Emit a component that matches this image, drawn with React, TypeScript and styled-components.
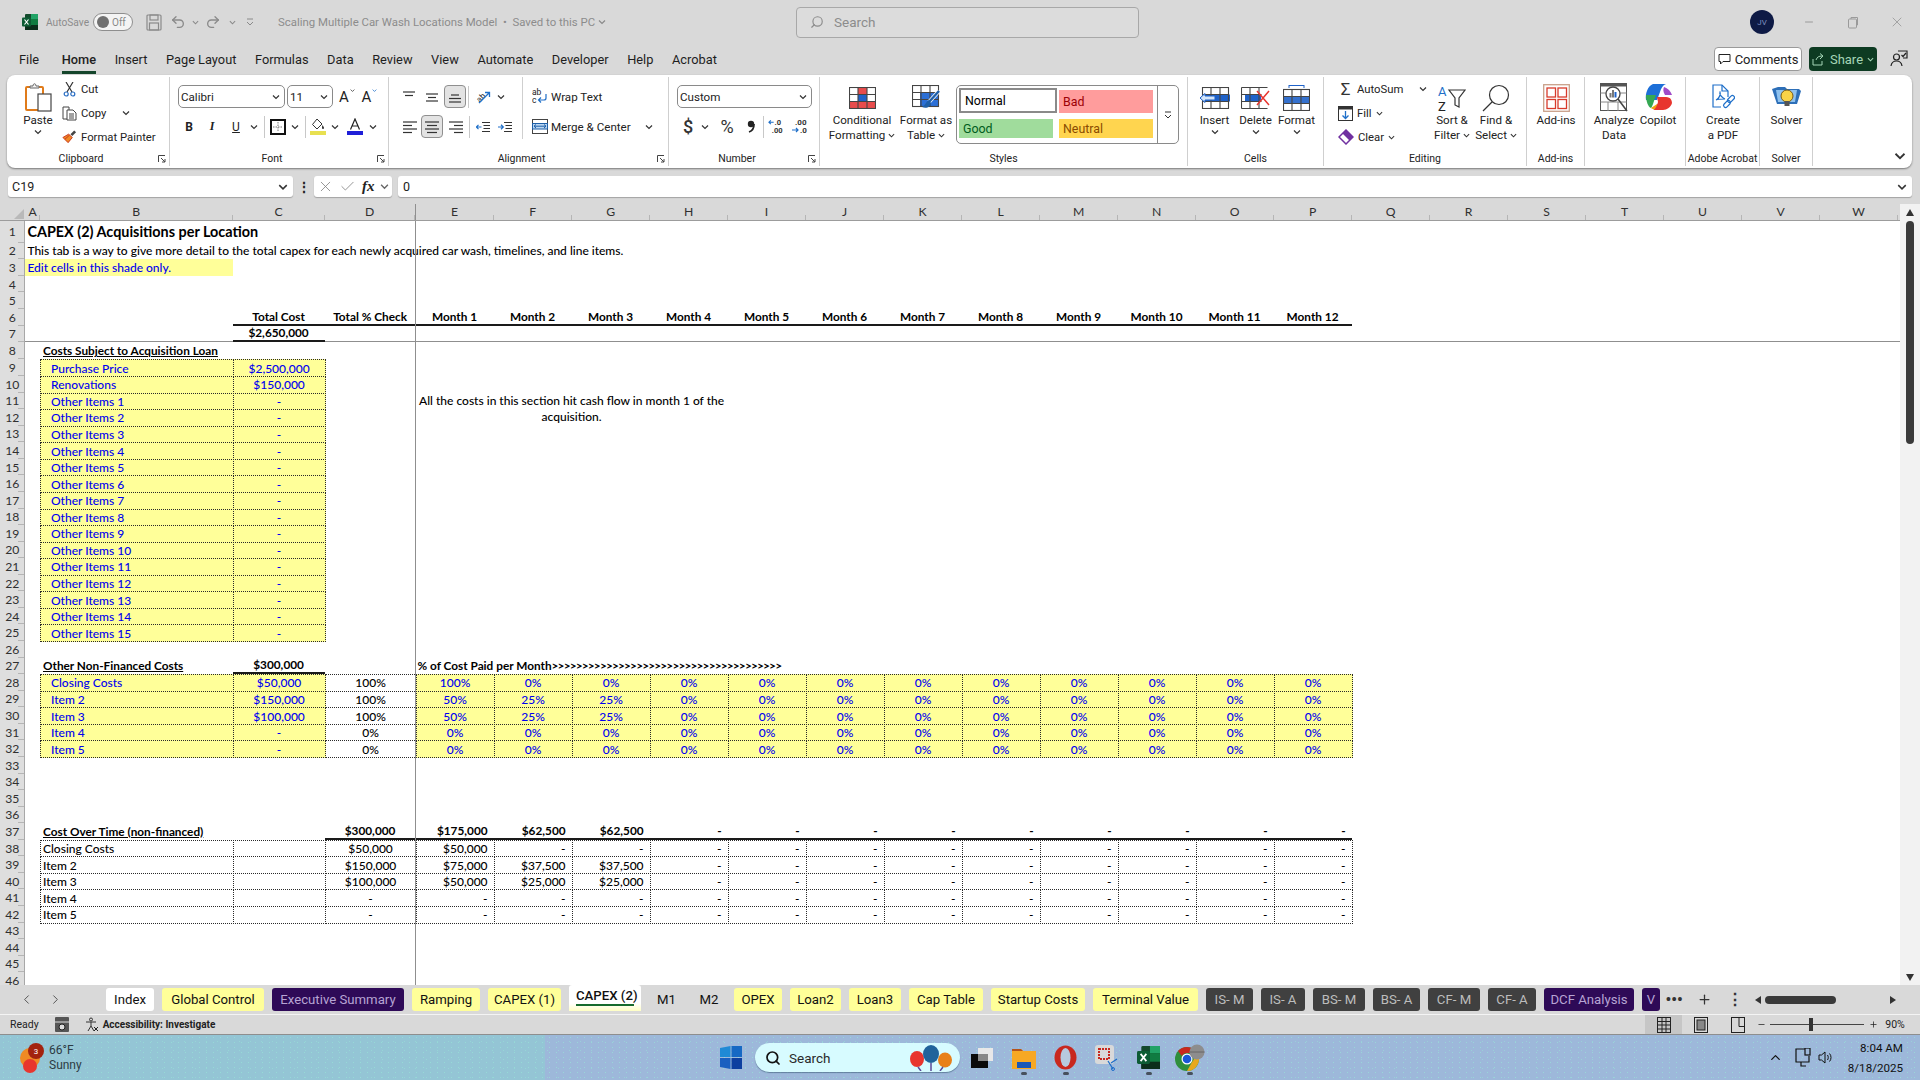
import React from 'react';
import styled, {createGlobalStyle} from 'styled-components';
import {Redo2, Search, Undo2, X, Check, Minus, Plus, ChevronUp, ChevronLeft, ChevronRight} from 'lucide-react';

const UI = `Roboto, "Liberation Sans", sans-serif`;
const SHEET = `Lato, "Liberation Sans", sans-serif`;

const GlobalStyle = createGlobalStyle`
    html, body {
        margin: 0;
        padding: 0;
        width: 1920px;
        height: 1080px;
        overflow: hidden;
        background: #d9d9d9;
    }
`;

const Window = styled.div`
    width: 1920px;
    height: 1080px;
    display: flex;
    flex-direction: column;
    background: #d9d9d9;
    font-family: ${UI};
    color: #222;
    overflow: hidden;
`;

/* ---------- title bar ---------- */

const TitleBar = styled.header`
    height: 44px;
    flex: none;
    display: flex;
    align-items: center;
`;

const TitleLeft = styled.div`
    width: 796px;
    flex: none;
    display: flex;
    align-items: center;
    padding-left: 14px;
    box-sizing: border-box;
`;

const Faded = styled.span<{$w?: number; $size?: number}>`
    font-size: ${p => p.$size ?? 10.2}px;
    color: #8c8c8c;
    white-space: pre;
    ${p => p.$w ? `width: ${p.$w}px; flex: none;` : ''}
`;

const Toggle = styled.span`
    width: 40px;
    height: 18px;
    box-sizing: border-box;
    border: 1.5px solid #8e8e8e;
    border-radius: 9px;
    background: #f4f4f4;
    display: flex;
    align-items: center;
    gap: 3px;
    padding-left: 3px;
    font-size: 10px;
    color: #888;
    margin-right: 8px;

    &::before {
        content: '';
        width: 12px;
        height: 12px;
        border-radius: 50%;
        background: #707070;
    }
`;

const Slot = styled.span<{$w: number}>`
    width: ${p => p.$w}px;
    flex: none;
    display: inline-flex;
    align-items: center;
    justify-content: center;
`;

const SearchBox = styled.div`
    width: 343px;
    height: 31px;
    flex: none;
    box-sizing: border-box;
    border: 1.5px solid #a8a8a8;
    border-radius: 4px;
    background: #dcdcdc;
    display: flex;
    align-items: center;
    gap: 10px;
    padding-left: 13px;
    font-size: 13.5px;
    color: #8c8c8c;
`;

const TitleRight = styled.div`
    margin-left: auto;
    display: flex;
    align-items: center;
    padding-right: 1px;
`;

const Avatar = styled.span`
    width: 24px;
    height: 24px;
    border-radius: 50%;
    background: #0e1a45;
    color: #7f8fc0;
    font-size: 8px;
    display: flex;
    align-items: center;
    justify-content: center;
    margin-right: 13px;
`;

const WindowButton = styled.span`
    width: 44px;
    display: flex;
    justify-content: center;
    color: #9a9a9a;
`;

/* ---------- menu row ---------- */

const MenuRow = styled.nav`
    height: 31px;
    flex: none;
    display: flex;
    align-items: center;
    gap: 18.6px;
    padding-left: 19px;
    font-size: 12.8px;
`;

const MenuItem = styled.span<{$active?: boolean}>`
    position: relative;
    line-height: 20px;
    font-weight: ${p => p.$active ? 500 : 400};
    color: #1e1e1e;

    ${p => p.$active ? `
        margin-left: 4px;

        &::after {
            content: '';
            position: absolute;
            left: 0;
            right: 0;
            bottom: -4px;
            height: 3px;
            background: #14452b;
        }
    ` : ''}
`;

const MenuRight = styled.div`
    margin-left: auto;
    display: flex;
    align-items: center;
    gap: 7px;
    padding-right: 12px;
    margin-top: -1px;
`;

const CommentsButton = styled.span`
    width: 88px;
    height: 24px;
    box-sizing: border-box;
    border: 1.5px solid #9a9a9a;
    border-radius: 4px;
    background: #fff;
    display: flex;
    align-items: center;
    justify-content: center;
    gap: 4px;
    font-size: 13px;
`;

const ShareButton = styled.span`
    width: 68px;
    height: 24px;
    border-radius: 4px;
    background: #0d3b22;
    color: #a5d6b7;
    display: flex;
    align-items: center;
    justify-content: center;
    gap: 4px;
    font-size: 13px;
    margin-right: 6px;
`;

/* ---------- ribbon ---------- */

const Ribbon = styled.section`
    height: 93px;
    flex: none;
    margin: 0 8px 0 7px;
    box-sizing: border-box;
    padding-top: 2px;
    background: #fff;
    border-radius: 8px;
    box-shadow: 0 1px 2px rgba(0, 0, 0, 0.45);
    display: flex;
    position: relative;
    font-size: 11.6px;
`;

const Group = styled.div<{$w: number}>`
    width: ${p => p.$w}px;
    flex: none;
    box-sizing: border-box;
    margin-bottom: 2px;
    display: flex;
    flex-direction: column;
    border-right: 1.5px solid #cfcfcf;
`;

const GroupBody = styled.div<{$pad?: number}>`
    flex: 1;
    display: flex;
    padding-left: ${p => p.$pad ?? 0}px;
`;

const GroupLabel = styled.div<{$launch?: boolean}>`
    height: 14px;
    flex: none;
    box-sizing: border-box;
    position: relative;
    text-align: center;
    line-height: 14px;
    font-size: 10.5px;
    color: #222;
    padding-right: ${p => p.$launch ? 14 : 0}px;
`;

const Launcher = styled.span`
    position: absolute;
    right: 3px;
    top: 3px;
    display: flex;
`;

const Big = styled.div<{$w: number}>`
    width: ${p => p.$w}px;
    flex: none;
    display: flex;
    flex-direction: column;
    align-items: center;
    padding-top: 5px;
    line-height: 15px;
    white-space: nowrap;
`;

const BigIcon = styled.div`
    height: 31px;
    display: flex;
    align-items: center;
    justify-content: center;
`;

const SmallColumn = styled.div<{$w: number; $gap?: number}>`
    width: ${p => p.$w}px;
    flex: none;
    display: flex;
    flex-direction: column;
    margin-left: ${p => p.$gap ?? 0}px;
`;

const SmallRow = styled.div`
    height: 24px;
    display: flex;
    align-items: center;
    gap: 4px;
    white-space: nowrap;
    font-size: 11.3px;
`;

const Stack = styled.div`
    display: flex;
    flex-direction: column;
    gap: 7px;
    padding-top: 8px;
`;

const Line = styled.div`
    height: 23px;
    display: flex;
    align-items: center;
    white-space: nowrap;
`;

const Select = styled.div<{$w: number}>`
    width: ${p => p.$w}px;
    height: 23px;
    flex: none;
    box-sizing: border-box;
    border: 1px solid #8a8a8a;
    border-radius: 5px;
    display: flex;
    align-items: center;
    justify-content: space-between;
    padding: 0 4px 0 2px;
    margin-right: 2px;
`;

const Pressed = styled.span<{$on?: boolean; $w: number}>`
    width: ${p => p.$w}px;
    height: 23px;
    flex: none;
    box-sizing: border-box;
    display: inline-flex;
    align-items: center;
    justify-content: center;
    border-radius: 4px;
    ${p => p.$on ? 'background: #e3e3e3; border: 1px solid #8f8f8f;' : ''}
`;

const RuleV = styled.span`
    width: 1px;
    height: 22px;
    flex: none;
    background: #c8c8c8;
`;

const FontBtn = styled.span<{$italic?: boolean; $under?: boolean}>`
    font-family: ${p => p.$italic ? '"Liberation Serif", serif' : UI};
    font-style: ${p => p.$italic ? 'italic' : 'normal'};
    font-weight: ${p => p.$under ? 400 : 700};
    text-decoration: ${p => p.$under ? 'underline' : 'none'};
    font-size: 12px;
`;

const GrowA = styled.span`
    font-size: 15px;
    display: inline-flex;
    align-items: flex-start;
    gap: 1px;
`;

const NumberGlyph = styled.span<{$size: number; $weight?: number}>`
    font-size: ${p => p.$size}px;
    font-weight: ${p => p.$weight ?? 400};
    color: #333;
    line-height: 1;
`;

const AlignSide = styled.div`
    width: 126px;
    flex: none;
    box-sizing: border-box;
    border-right: 1.5px solid #cfcfcf;
    height: 62px;
    padding-left: 1px;
`;

const Gallery = styled.div`
    width: 223px;
    height: 59px;
    margin: 8px 0 0 1px;
    flex: none;
    box-sizing: border-box;
    border: 1px solid #8a8a8a;
    border-radius: 5px;
    display: flex;
`;

const StyleGrid = styled.div`
    width: 200px;
    flex: none;
    display: grid;
    grid-template-columns: 98px 94px;
    grid-template-rows: 25px 21px;
    gap: 4px 2px;
    padding: 2px 0 0 2px;
    box-sizing: border-box;
`;

const StyleCell = styled.div<{$bg: string; $fg: string; $w?: number; $selected?: boolean}>`
    background: ${p => p.$bg};
    color: ${p => p.$fg};
    display: flex;
    align-items: center;
    padding-left: 4px;
    font-size: 12.4px;
    box-sizing: border-box;
    ${p => p.$w ? `width: ${p.$w}px;` : ''}
    ${p => p.$selected ? 'border: 2px solid #8a8a8a;' : 'margin-top: 2px;'}
`;

const GalleryMore = styled.div`
    flex: 1;
    border-left: 1.5px solid #8a8a8a;
    display: flex;
    align-items: center;
    justify-content: center;
`;

const RibbonCollapse = styled.span`
    position: absolute;
    right: 6px;
    bottom: 6px;
    display: flex;
`;

/* ---------- formula bar ---------- */

const FormulaBar = styled.div`
    height: 21px;
    flex: none;
    margin-top: 8px;
    display: flex;
    align-items: stretch;
    font-family: ${SHEET};
    font-size: 13px;
`;

const NameBox = styled.div`
    width: 285px;
    margin-left: 8px;
    flex: none;
    box-sizing: border-box;
    background: #fff;
    border-radius: 3px;
    display: flex;
    align-items: center;
    justify-content: space-between;
    padding: 0 5px 0 4px;
    font-family: ${UI};
    font-size: 12.5px;
    box-shadow: 0 1px 1px rgba(0, 0, 0, 0.25);
`;

const Grip = styled.span`
    width: 21px;
    flex: none;
    display: flex;
    align-items: center;
    justify-content: center;
    font-weight: 700;
    font-size: 14px;
`;

const FxBox = styled.div`
    width: 78px;
    flex: none;
    background: #fff;
    border-radius: 3px;
    display: flex;
    align-items: center;
    justify-content: space-around;
    color: #7a7a7a;
    box-shadow: 0 1px 1px rgba(0, 0, 0, 0.25);
`;

const Fx = styled.span`
    font-family: "Liberation Serif", serif;
    font-style: italic;
    font-weight: 700;
    font-size: 15px;
    color: #222;
`;

const FormulaInput = styled.div`
    flex: 1;
    margin: 0 8px 0 6px;
    background: #fff;
    border-radius: 3px;
    display: flex;
    align-items: center;
    justify-content: space-between;
    padding: 0 5px;
    font-family: ${UI};
    font-size: 12.5px;
    box-shadow: 0 1px 1px rgba(0, 0, 0, 0.25);
`;

/* ---------- sheet ---------- */

const SheetArea = styled.div`
    flex: 1;
    min-height: 0;
    margin-top: 7px;
    display: flex;
`;

const SheetMain = styled.div`
    width: 1900px;
    flex: none;
    display: flex;
    flex-direction: column;
    min-height: 0;
`;

const gridColumns = '25.4px 14.6px 192.6px 92px 91px repeat(19, 78px)';

const ColumnHeader = styled.div`
    height: 16px;
    flex: none;
    display: grid;
    grid-template-columns: ${gridColumns};
    border-bottom: 1px solid #9c9c9c;
    font-family: ${SHEET};
    font-size: 12.2px;
    color: #303030;
`;

const ColumnHead = styled.div<{$freeze?: boolean}>`
    text-align: center;
    line-height: 16px;
    box-sizing: border-box;
    position: relative;
    ${p => p.$freeze ? 'border-right: 1px solid #8f8f8f;' : ''}

    &::after {
        content: '';
        position: absolute;
        right: 0;
        bottom: 0;
        width: 1px;
        height: 5px;
        background: #b5b5b5;
    }
`;

const Corner = styled.div`
    display: flex;
    justify-content: flex-end;
    align-items: flex-end;
    padding: 0 1px 1px 0;
`;

const SheetBody = styled.div`
    flex: 1;
    min-height: 0;
    overflow: hidden;
    position: relative;
    background: #fff;
    font-family: ${SHEET};
    font-size: 12px;
    font-weight: 500;
    color: #000;
`;

const FreezeLine = styled.div`
    position: absolute;
    left: 415px;
    top: 0;
    bottom: 0;
    width: 1px;
    background: #8f8f8f;
`;

const Row = styled.div<{$h: number; $freeze?: boolean}>`
    height: ${p => p.$h}px;
    display: grid;
    grid-template-columns: ${gridColumns};
    grid-template-rows: ${p => p.$h}px;
    ${p => p.$freeze ? 'box-shadow: inset 0 -1px 0 #8f8f8f;' : ''}
`;

const RowHead = styled.div`
    grid-column: 1;
    background: #dedede;
    font-size: 12.2px;
    font-weight: 400;
    color: #303030;
    display: flex;
    align-items: center;
    justify-content: center;
    border-right: 1px solid #a8a8a8;
    position: relative;

    &::after {
        content: '';
        position: absolute;
        right: 0;
        bottom: 0;
        width: 6px;
        height: 1px;
        background: #b5b5b5;
    }
`;

const Cell = styled.div<{
    $col: number;
    $span?: number;
    $align?: string;
    $bold?: boolean;
    $blue?: boolean;
    $yellow?: boolean;
    $indent?: number;
    $dotted?: boolean;
    $heavy?: boolean;
    $under?: boolean;
    $wrap?: boolean;
    $title?: boolean;
}>`
    grid-column: ${p => p.$col} / span ${p => p.$span ?? 1};
    box-sizing: border-box;
    min-width: 0;
    position: relative;
    display: flex;
    align-items: center;
    justify-content: ${p => p.$align === 'center' ? 'center' : p.$align === 'right' ? 'flex-end' : 'flex-start'};
    padding-left: ${p => p.$indent ?? 0}px;
    padding-right: ${p => p.$align === 'right' ? 6 : 0}px;
    white-space: ${p => p.$wrap ? 'normal' : 'nowrap'};
    font-weight: ${p => p.$bold ? 700 : 500};
    font-size: ${p => p.$title ? '14.4px' : p.$bold ? '11.8px' : 'inherit'};
    color: ${p => p.$blue ? '#0000f0' : '#000'};
    background: ${p => p.$yellow ? '#ffff99' : 'transparent'};
    text-decoration: ${p => p.$under ? 'underline' : 'none'};
    ${p => p.$dotted ? 'border: 1px dotted #2a2a2a; margin: 0 -1px -1px 0;' : ''}
    ${p => p.$heavy ? 'border-bottom: 2px solid #1a1a1a;' : ''}
    ${p => p.$wrap ? 'text-align: center; line-height: 16.57px; align-items: flex-start;' : ''}
`;

const Arrows = styled.span`
    letter-spacing: -0.8px;
`;

const Scrollbar = styled.div`
    flex: 1;
    background: #f2f2f2;
    display: flex;
    flex-direction: column;
    align-items: center;
`;

const ScrollThumb = styled.div`
    width: 8px;
    height: 223px;
    margin-top: 5px;
    border-radius: 4px;
    background: #3a3a3a;
`;

const ScrollArrow = styled.div<{$down?: boolean}>`
    width: 0;
    height: 0;
    margin-top: ${p => p.$down ? 'auto' : '5px'};
    margin-bottom: ${p => p.$down ? '4px' : '0'};
    border-left: 4px solid transparent;
    border-right: 4px solid transparent;
    ${p => p.$down ? 'border-top: 7px solid #333;' : 'border-bottom: 7px solid #333;'}
`;

/* ---------- tabs ---------- */

const TabBar = styled.div`
    height: 30px;
    flex: none;
    display: flex;
    align-items: flex-start;
    border-bottom: 1px solid #f4f4f4;
    box-sizing: border-box;
`;

const TabArrows = styled.div`
    width: 106px;
    flex: none;
    height: 29px;
    display: flex;
    align-items: center;
    padding-left: 19px;
    box-sizing: border-box;
    gap: 14px;
    color: #444;
`;

const TabList = styled.div`
    width: 1554px;
    flex: none;
    display: flex;
    gap: 8px;
    overflow: hidden;
    height: 29px;
`;

const Tab = styled.div<{$w: number; $kind: string}>`
    width: ${p => p.$w}px;
    height: 23px;
    margin-top: 3px;
    flex: none;
    box-sizing: border-box;
    border-radius: 3px;
    display: flex;
    align-items: center;
    justify-content: center;
    white-space: nowrap;
    font-size: 13.2px;
    color: #111;
    ${p => p.$kind === 'white' ? 'background: #fff;' : ''}
    ${p => p.$kind === 'yellow' ? 'background: #ffff99;' : ''}
    ${p => p.$kind === 'purple' ? 'background: #2e0a57; color: #b7a4d4;' : ''}
    ${p => p.$kind === 'gray' ? 'background: #404040; color: #bdbdbd;' : ''}
`;

const ActiveTab = styled.div<{$w: number}>`
    width: ${p => p.$w}px;
    height: 26px;
    flex: none;
    box-sizing: border-box;
    padding: 3px 7px 0;
    background: linear-gradient(#fff 70%, #ffffc4);
    border-radius: 3px 3px 0 0;
    text-align: center;
    font-size: 13.2px;
    font-weight: 500;
    color: #111;
    white-space: nowrap;
    line-height: 15px;

    &::after {
        content: '';
        display: block;
        height: 2px;
        margin-top: 1px;
        background: #176b2e;
    }
`;

const TabTools = styled.div`
    flex: 1;
    height: 29px;
    display: flex;
    align-items: center;
    color: #333;
`;

const HScrollThumb = styled.div`
    width: 71px;
    height: 8px;
    border-radius: 4px;
    background: #3a3a3a;
    margin: 0 4px 0 4px;
`;

const ScrollArrowLeft = styled.span`
    width: 0;
    height: 0;
    margin-left: 5px;
    border-top: 4px solid transparent;
    border-bottom: 4px solid transparent;
    border-right: 6px solid #333;
`;

const ScrollArrowRight = styled.span`
    width: 0;
    height: 0;
    border-top: 4px solid transparent;
    border-bottom: 4px solid transparent;
    border-left: 6px solid #333;
`;

/* ---------- status ---------- */

const StatusBar = styled.footer`
    height: 20px;
    flex: none;
    display: flex;
    align-items: center;
    font-size: 10.5px;
    border-bottom: 1px solid #8e8e8e;
    box-sizing: border-box;
`;

const StatusLeft = styled.div`
    display: flex;
    align-items: center;
    gap: 16px;
    padding-left: 10px;
`;

const Accessibility = styled.span`
    display: flex;
    align-items: center;
    gap: 4px;
    font-weight: 700;
    font-size: 10px;
`;

const StatusRight = styled.div`
    margin-left: auto;
    display: flex;
    align-items: center;
    height: 100%;
    padding-right: 8px;
`;

const ViewButton = styled.span<{$on?: boolean}>`
    width: 37px;
    height: 100%;
    display: flex;
    align-items: center;
    justify-content: center;
    ${p => p.$on ? 'background: #c6c6c6;' : ''}
`;

const ZoomTrack = styled.span`
    width: 94px;
    height: 1px;
    margin: 0 4px;
    background: #444;
    position: relative;

    &::after {
        content: '';
        position: absolute;
        left: 39px;
        top: -6px;
        width: 4px;
        height: 13px;
        background: #333;
    }
`;

/* ---------- taskbar ---------- */

const Taskbar = styled.footer`
    height: 45px;
    flex: none;
    display: flex;
    align-items: center;
    background:
        radial-gradient(circle, rgba(150, 226, 214, 0.7) 0.7px, transparent 1px) 0 0 / 7px 5px,
        radial-gradient(circle, rgba(150, 226, 214, 0.55) 0.7px, transparent 1px) 3px 2px / 11px 9px,
        linear-gradient(90deg, #94c5d5 0 545px, #9db8da 545px);
    color: #222;
`;

const Weather = styled.div`
    width: 720px;
    flex: none;
    display: flex;
    align-items: center;
    gap: 4px;
    padding-left: 19px;
    box-sizing: border-box;
    font-size: 12px;
    line-height: 15px;
`;

const WeatherText = styled.div`
    color: #2c3b44;
`;

const TaskSearch = styled.div`
    width: 205px;
    height: 29px;
    flex: none;
    margin: 0 2px 0 13px;
    border-radius: 15px;
    background: #d7fbff;
    box-shadow: 0 1px 1px rgba(60, 90, 120, 0.6);
    display: flex;
    align-items: center;
    gap: 8px;
    padding: 0 7px 0 10px;
    box-sizing: border-box;
    font-size: 13.5px;
    color: #2a2a2a;
`;

const BalloonSlot = styled.span`
    margin-left: auto;
    display: flex;
`;

const TaskItem = styled.div<{$dot?: boolean}>`
    width: 41.5px;
    height: 45px;
    flex: none;
    position: relative;
    display: flex;
    align-items: center;
    justify-content: center;

    ${p => p.$dot ? `
        &::after {
            content: '';
            position: absolute;
            bottom: 5px;
            left: 50%;
            width: 6px;
            height: 3px;
            margin-left: -3px;
            border-radius: 2px;
            background: #47505c;
        }
    ` : ''}
`;

const Tray = styled.div`
    margin-left: auto;
    display: flex;
    align-items: center;
    gap: 7px;
    padding-right: 17px;
`;

const TrayChevron = styled.span`
    display: flex;
    margin-right: 5px;
`;

const Clock = styled.div`
    text-align: right;
    font-size: 11.6px;
    line-height: 20px;
    margin-left: 8px;
    color: #111;
`;

/* ---------- icons ---------- */

const Chev = ({size = 8, color = '#333'}: {size?: number; color?: string}) =>
    <svg width={size} height={size} viewBox="0 0 8 8"><path d="M1 2.500 4 5.500 7 2.500" fill="none" stroke={color} strokeWidth="1.200" /></svg>;

const LauncherIcon = () =>
    <svg width="8" height="8" viewBox="0 0 8 8" fill="none" stroke="#444"><path d="M.5 7V.5H7M3 3l4 4M7 4v3H4" /></svg>;

const ExcelLogo = ({size = 16}: {size?: number}) =>
    <svg width={size} height={size} viewBox="0 0 16 16">
        <rect x="3" y="0" width="13" height="16" rx="1" fill="#134a2c" />
        <rect x="9" y="0" width="7" height="5" fill="#21a366" />
        <rect x="9" y="5" width="7" height="6" fill="#107c41" />
        <rect x="3" y="11" width="13" height="5" fill="#0b2e1b" />
        <rect x="0" y="3.500" width="9" height="9" rx="1" fill="#0d5c34" />
        <path d="M2.500 5.500 6.500 10.500M6.500 5.500 2.500 10.500" stroke="#fff" strokeWidth="1.200" />
    </svg>;

const SaveIcon = () =>
    <svg width="16" height="17" viewBox="0 0 16 17" fill="none" stroke="#8a8a8a" strokeWidth="1.200">
        <rect x="1" y="1" width="14" height="15" rx="1" /><rect x="4" y="1" width="8" height="5" /><rect x="3.500" y="9" width="9" height="7" />
    </svg>;

const CustomizeIcon = ({color = '#8a8a8a'}: {color?: string}) =>
    <svg width="10" height="10" viewBox="0 0 10 10" fill="none" stroke={color}><path d="M2 2h6M2 5l3 3 3-3" /></svg>;

const RestoreIcon = () =>
    <svg width="12" height="13" viewBox="0 0 12 13" fill="none" stroke="#9a9a9a"><rect x="1.500" y="3" width="8" height="9" rx="1" /><path d="M4 3V1.500h6.500V9H9.500" /></svg>;

const BubbleIcon = () =>
    <svg width="13" height="13" viewBox="0 0 13 13" fill="none" stroke="#222"><path d="M1 1.500h11v7H5L2.500 11V8.500H1z" /></svg>;

const ShareIcon = () =>
    <svg width="14" height="14" viewBox="0 0 14 14" fill="none" stroke="#a5d6b7"><path d="M1 7v6h9V9M4 8c1-3 3-4 6-4M8 1.500 11 4 8 7" /></svg>;

const CoachIcon = () =>
    <svg width="18" height="18" viewBox="0 0 18 18" fill="none" stroke="#222" strokeWidth="1.200"><circle cx="6.500" cy="7" r="3" /><path d="M1 16c.5-3.500 2.500-5 5.500-5s5 1.500 5.500 5M8 1h9v7h-4" /><path d="M11.500 5 13 6.500 16 3" /></svg>;

const PasteIcon = () =>
    <svg width="27" height="29" viewBox="0 0 27 29">
        <rect x="1" y="4" width="17" height="23" rx="1" fill="#fff" stroke="#e07b1a" strokeWidth="2" />
        <path d="M5 5V3h3c0-3 3-3 3 0h3v2z" fill="#f4f4f4" stroke="#666" />
        <rect x="13" y="11" width="13" height="17" fill="#fff" stroke="#444" strokeWidth="1.200" />
    </svg>;

const ScissorsIcon = () =>
    <svg width="13" height="15" viewBox="0 0 13 15" fill="none">
        <path d="M3 0 9 10M10 0 4 10" stroke="#333" strokeWidth="1.200" />
        <circle cx="3.200" cy="12" r="2" stroke="#2b6fc4" strokeWidth="1.200" /><circle cx="9.800" cy="12" r="2" stroke="#2b6fc4" strokeWidth="1.200" />
    </svg>;

const CopyIcon = () =>
    <svg width="15" height="15" viewBox="0 0 15 15" fill="#fff" stroke="#444">
        <path d="M1 1h6v12H1z" /><path d="M5 4h6l3 3v7H5z" /><path d="M7 8h5M7 10h5M7 12h5" />
    </svg>;

const PainterIcon = () =>
    <svg width="16" height="16" viewBox="0 0 16 16">
        <path d="M1 8.500 6.500 14 11 8.500 7 5z" fill="#f08a24" stroke="#c7341c" />
        <path d="M3 10.500 8 6" stroke="#c7341c" />
        <path d="M9 5 13 1l2 2-4 4z" fill="#444" />
    </svg>;

const BorderIcon = () =>
    <svg width="16" height="16" viewBox="0 0 16 16" fill="none">
        <rect x="1" y="1" width="14" height="14" stroke="#111" strokeWidth="2" />
        <path d="M8 3v10M3 8h10" stroke="#777" strokeDasharray="1.500 1" />
    </svg>;

const FillIcon = () =>
    <svg width="16" height="17" viewBox="0 0 16 17">
        <path d="M7 1 2.500 6.500 7 11l5-5z" fill="#fff" stroke="#333" />
        <path d="M12.500 7c1 1.500 1.500 2.500 1.500 3a1 1 0 0 1-2 0c0-.5 0-1.500.5-3z" fill="#333" />
        <rect y="13" width="16" height="4" fill="#e8e050" />
    </svg>;

const FontColorIcon = () =>
    <svg width="16" height="17" viewBox="0 0 16 17">
        <path d="M3.500 11.500 8 1l4.500 10.500M5 8h6" fill="none" stroke="#222" strokeWidth="1.200" />
        <rect y="13" width="16" height="4" fill="#1f1fd8" />
    </svg>;

const Lines = ({widths, top = 2, step = 3.5}: {widths: [number, number][]; top?: number; step?: number}) =>
    <svg width="14" height="14" viewBox="0 0 14 14" stroke="#333" strokeWidth="1.200">
        {widths.map(([x, w], i) => <path key={i} d={`M${x} ${top + i * step}h${w}`} />)}
    </svg>;

const IndentIcon = ({flip}: {flip?: boolean}) =>
    <svg width="14" height="14" viewBox="0 0 14 14">
        <g stroke="#333" strokeWidth="1.100">
            <path d="M6 2.500h8M7.500 5.500h6.500M7.500 8.500h6.500M6 11.500h8" />
        </g>
        <path d={flip ? 'M0 7h5M3 4.800 5.300 7 3 9.200' : 'M5.500 7h-5M2.500 4.800.3 7l2.200 2.200'} fill="none" stroke="#1e6fc9" strokeWidth="1.200" />
    </svg>;

const OrientIcon = () =>
    <svg width="16" height="16" viewBox="0 0 16 16">
        <text x="1" y="11" fontSize="8" fontFamily="Roboto" fill="#222" transform="rotate(-45 6 8)">ab</text>
        <path d="M4 14 14 4M10 3.500h4.500V8" fill="none" stroke="#1e6fc9" strokeWidth="1.300" />
    </svg>;

const WrapIcon = () =>
    <svg width="16" height="17" viewBox="0 0 16 17" fill="none">
        <text x="0" y="7" fontSize="8.500" fontFamily="Roboto" fill="#222">ab</text>
        <text x="0" y="15" fontSize="8.500" fontFamily="Roboto" fill="#222">c</text>
        <path d="M14 6v4a2 2 0 0 1-2 2H7M9 9.500 6.500 12 9 14.500" stroke="#1e6fc9" strokeWidth="1.200" />
    </svg>;

const MergeIcon = () =>
    <svg width="16" height="15" viewBox="0 0 16 15" fill="none" stroke="#1e5fa8">
        <rect x=".5" y=".5" width="15" height="14" fill="#fff" stroke="#444" />
        <rect x=".5" y="4.500" width="15" height="5.500" fill="#bcd7f2" />
        <path d="M2 7.200h12M4 5.500 2 7.200l2 1.800M12 5.500l2 1.700-2 1.800" />
    </svg>;

const DecimalIcon = ({up}: {up?: boolean}) =>
    <svg width="17" height="17" viewBox="0 0 17 17">
        <text x={up ? 7 : 4} y="7" fontSize="8" fontWeight="700" fontFamily="Roboto" fill="#333">{up ? '.0' : '.00'}</text>
        <text x={up ? 4 : 9} y="15" fontSize="8" fontWeight="700" fontFamily="Roboto" fill="#333">{up ? '.00' : '.0'}</text>
        <path d={up ? 'M6 4H1M3 2 1 4l2 2' : 'M1 12h6M5 10l2 2-2 2'} fill="none" stroke="#1e6fc9" strokeWidth="1.200" />
    </svg>;

const CommaIcon = () =>
    <svg width="8" height="14" viewBox="0 0 8 14">
        <circle cx="4" cy="4" r="3.200" fill="#222" />
        <path d="M7 4c0 4-2 7-5 8" fill="none" stroke="#222" strokeWidth="1.800" />
    </svg>;

const Table = ({w = 27, h = 22, children}: {w?: number; h?: number; children?: React.ReactNode}) =>
    <svg width={w} height={h} viewBox="0 0 27 22">
        {children}
        <g fill="none" stroke="#444" strokeWidth="1.100">
            <rect x=".5" y=".5" width="26" height="21" />
            <path d="M9 .5v21M18 .5v21M.5 7.500h26M.5 14.500h26" />
        </g>
    </svg>;

const ConditionalIcon = () =>
    <Table>
        <rect x="9" y="0" width="9" height="7" fill="#e84c4c" />
        <rect x="9" y="7.500" width="9" height="7" fill="#1f62c9" />
        <rect x="9" y="15" width="18" height="7" fill="#e84c4c" />
        <rect x="0" y="15" width="9" height="7" fill="#e84c4c" />
    </Table>;

const FormatTableIcon = () =>
    <svg width="29" height="25" viewBox="0 0 29 25">
        <rect x="8" y="8" width="18" height="14" fill="#2b6fd6" />
        <g fill="none" stroke="#444" strokeWidth="1.100">
            <rect x=".5" y=".5" width="26" height="21" />
            <path d="M9 .5v21M18 .5v21M.5 7.500h26M.5 14.500h26" />
        </g>
        <path d="M27 6 17 17" stroke="#fff" strokeWidth="4" />
        <path d="M27 6 17 17" stroke="#1e5fa8" strokeWidth="2.500" />
        <path d="M17 15c-3 1-3 5-7 7 4 2 9 0 9-4z" fill="#1e5fa8" />
    </svg>;

const InsertIcon = () =>
    <svg width="31" height="22" viewBox="0 0 31 22">
        <rect x="3" y="7.500" width="28" height="7" fill="#1f62c9" />
        <g fill="none" stroke="#444" strokeWidth="1.100"><rect x="3.500" y=".5" width="26" height="21" /><path d="M12 .5v21M21 .5v21M3.500 7.500h26M3.500 14.500h26" /></g>
        <path d="M16 9H6V6.500L1 11l5 4.500V13h10z" fill="#d5e6fa" stroke="#1f62c9" />
    </svg>;

const DeleteIcon = () =>
    <svg width="29" height="22" viewBox="0 0 29 22">
        <rect x="4" y="7.500" width="16" height="7" fill="#1f62c9" />
        <g fill="none" stroke="#444" strokeWidth="1.100"><path d="M.5 .5h26M.5 21.500h26M.5 7.500h20M.5 14.500h20M9 .5v21M18 .5v21M.5 .5v21" /></g>
        <path d="M16 4 28 18M28 4 16 18" stroke="#e8352e" strokeWidth="1.500" />
    </svg>;

const FormatIcon = () =>
    <svg width="27" height="26" viewBox="0 0 27 26">
        <path d="M6 .5h15M6 0v3M21 0v3" stroke="#1f62c9" />
        <rect x="0" y="11" width="27" height="7" fill="#1f62c9" opacity=".9" />
        <g fill="none" stroke="#444" strokeWidth="1.100"><rect x=".5" y="4.500" width="26" height="21" /><path d="M9 4.500v21M18 4.500v21M.5 11.500h26M.5 18.500h26" /></g>
    </svg>;

const FillDownIcon = () =>
    <svg width="15" height="15" viewBox="0 0 15 15" fill="none">
        <rect x=".5" y=".5" width="14" height="14" fill="#fff" stroke="#333" />
        <path d="M.5 .5h14v3H.5z" fill="#333" />
        <path d="M7.500 5v7M4.500 9.500l3 3 3-3" stroke="#1e6fc9" strokeWidth="1.300" />
    </svg>;

const ClearIcon = () =>
    <svg width="16" height="16" viewBox="0 0 16 16">
        <path d="M8 1 15 8 8 15 1 8z" fill="#fff" stroke="#7030a0" strokeWidth="1.500" />
        <path d="M8 1 15 8 11.500 11.500 4.500 4.500z" fill="#7030a0" />
    </svg>;

const SortIcon = () =>
    <svg width="28" height="28" viewBox="0 0 28 28">
        <text x="0" y="12" fontSize="13" fontFamily="Roboto" fill="#1e6fc9">A</text>
        <text x="0" y="27" fontSize="13" fontFamily="Roboto" fill="#222">Z</text>
        <path d="M11 6h16l-6 8v9l-4-2v-7z" fill="#fff" stroke="#333" strokeWidth="1.200" />
    </svg>;

const FindIcon = () =>
    <svg width="28" height="28" viewBox="0 0 28 28" fill="none" stroke="#333" strokeWidth="1.200">
        <circle cx="17" cy="11" r="9.500" /><path d="M10 18 1 27" />
    </svg>;

const AddinsIcon = () =>
    <svg width="27" height="28" viewBox="0 0 27 28" fill="none" stroke="#d83b2b" strokeWidth="1.300">
        <rect x=".7" y=".7" width="25.600" height="26.600" stroke="#c9a089" />
        <rect x="4" y="4" width="8.500" height="9" /><rect x="15" y="4" width="8.500" height="9" />
        <rect x="4" y="15.500" width="8.500" height="9" /><rect x="15" y="15.500" width="8.500" height="9" />
    </svg>;

const AnalyzeIcon = () =>
    <svg width="28" height="29" viewBox="0 0 28 29" fill="none">
        <rect x=".5" y=".5" width="26" height="27" fill="#fff" stroke="#555" />
        <path d="M.5 .5h26v3H.5z" fill="#555" />
        <path d="M.5 10h26M.5 19h26M8 19v9M18 19v9" stroke="#888" />
        <circle cx="13" cy="11" r="7" fill="#fff" stroke="#444" strokeWidth="1.300" />
        <path d="M9.500 14.500V10h2v4.500zM12 14.500V7h2v7.500z" fill="#777" />
        <path d="M14.500 14.500V9h2v5.500z" fill="#1f62c9" />
        <path d="M18 16 27 28" stroke="#444" strokeWidth="1.500" />
    </svg>;

const CopilotIcon = () =>
    <svg width="29" height="27" viewBox="0 0 29 27">
        <path d="M9 0h13c-3 1-5 4-6 8l-3 8H2C1 9 4 2 9 0z" fill="#1d6fd8" />
        <path d="M2 11h10l-2 6c-1 3-2 6-3 7-3-1-5-7-5-13z" fill="#35a853" />
        <path d="M7 24c2 2 12 3 15-1l-9 -3z" fill="#f2a30f" />
        <path d="M13 13h9c5 0 6 4 6 6-1 4-5 7-9 7H9c3-1 4-5 5-8z" fill="#e8352e" />
        <path d="M20 3c3 1 6 3 8 8h-7c-2-3-2-6-1-8z" fill="#a04bc8" />
    </svg>;

const PdfIcon = () =>
    <svg width="24" height="28" viewBox="0 0 24 28" fill="none" stroke="#1e6fc9" strokeWidth="1.200">
        <path d="M10 23H2V1h9l6 6v6" /><path d="M11 1v6h6" />
        <path d="M5 16c3-1 5-6 4-8-1 2 2 6 5 7-3 0-7 0-9 1z" />
        <rect x="12" y="18" width="8" height="4" rx="2" transform="rotate(-45 16 20)" />
        <rect x="16" y="13" width="8" height="4" rx="2" transform="rotate(-45 20 15)" />
    </svg>;

const SolverIcon = () =>
    <svg width="29" height="25" viewBox="0 0 29 25">
        <path d="M0 4 6 2h7l2 2h12l2 2-4 13H5z" fill="#2d6fb8" />
        <path d="M4 5h21l-2 12H6z" fill="#8ec1ee" />
        <circle cx="15" cy="11" r="6" fill="#f8d348" stroke="#7a5a10" />
        <rect x="12.500" y="16" width="5" height="5" fill="#555" />
    </svg>;

const CornerTriangle = () =>
    <svg width="10" height="10" viewBox="0 0 10 10"><path d="M10 0v10H0z" fill="#b9b9b9" /></svg>;

const MacroIcon = () =>
    <svg width="14" height="15" viewBox="0 0 14 15"><rect width="14" height="15" rx="1" fill="#555" /><path d="M0 5h14" stroke="#ddd" /><circle cx="7" cy="10" r="3" fill="#ddd" stroke="#222" /></svg>;

const AccessIcon = () =>
    <svg width="14" height="15" viewBox="0 0 14 15" fill="none" stroke="#333"><circle cx="6" cy="2.500" r="1.500" /><path d="M1 5h10M6 5v4M6 9l-3 5M6 9l3 5" /><path d="M9 10l4 4M13 10l-4 4" stroke="#222" /></svg>;

const NormalViewIcon = () =>
    <svg width="14" height="16" viewBox="0 0 14 16" fill="none" stroke="#222"><rect x=".5" y=".5" width="13" height="15" /><path d="M5 .5v15M9 .5v15M.5 4.500h13M.5 8h13M.5 12h13" /></svg>;

const PageViewIcon = () =>
    <svg width="14" height="16" viewBox="0 0 14 16" fill="none" stroke="#222"><rect x=".5" y=".5" width="13" height="15" /><rect x="3" y="3" width="8" height="10" fill="#888" /></svg>;

const BreakViewIcon = () =>
    <svg width="14" height="16" viewBox="0 0 14 16" fill="none" stroke="#222"><rect x=".5" y=".5" width="13" height="15" /><path d="M8 .5v9H13.500" /></svg>;

const WeatherIcon = () =>
    <svg width="26" height="32" viewBox="0 0 26 32">
        <circle cx="11" cy="16" r="10" fill="#f08a24" />
        <circle cx="11" cy="24" r="7" fill="#e8352e" />
        <circle cx="17" cy="9" r="8" fill="#a3230f" />
        <text x="17" y="12" fontSize="8" textAnchor="middle" fontFamily="Roboto" fill="#fff">3</text>
    </svg>;

const WindowsIcon = () =>
    <svg width="22" height="23" viewBox="0 0 22 23">
        <path d="M0 2 10.500 0v11H0z" fill="#1f8ad6" /><path d="M11.500 0 22 0v11H11.500z" fill="#1669c4" />
        <path d="M0 12h10.500v11L0 21z" fill="#1a5fc0" /><path d="M11.500 12H22v11H11.500z" fill="#0d3f9f" />
    </svg>;

const Balloons = () =>
    <svg width="43" height="26" viewBox="0 0 43 26">
        <ellipse cx="7" cy="14" rx="7" ry="8" fill="#e8352e" />
        <ellipse cx="35" cy="15" rx="7" ry="7.500" fill="#e8801a" />
        <ellipse cx="21" cy="9" rx="8" ry="9" fill="#20639b" />
        <path d="M21 18v8M8 22l3 4M33 22l-3 4" stroke="#5a4a9a" strokeWidth="1.500" />
    </svg>;

const TaskViewIcon = () =>
    <svg width="23" height="21" viewBox="0 0 23 21">
        <rect x="7" y="1" width="15" height="13" fill="#e8e8e8" />
        <rect x="0" y="7" width="17" height="14" fill="#0a0a0a" />
        <rect x="7" y="7" width="10" height="7" fill="#888" />
    </svg>;

const FolderIcon = () =>
    <svg width="24" height="22" viewBox="0 0 24 22">
        <path d="M0 2h9l2 2h13v18H0z" fill="#f7a824" />
        <path d="M0 2h9l2 2H0z" fill="#b5541a" />
        <rect x="5" y="15" width="14" height="6" fill="#1a57b8" />
    </svg>;

const OperaIcon = () =>
    <svg width="23" height="25" viewBox="0 0 23 25">
        <ellipse cx="11.500" cy="12.500" rx="11" ry="12" fill="#c8281e" />
        <ellipse cx="11.500" cy="12.500" rx="5" ry="9.500" fill="#b7cadf" />
    </svg>;

const SnipIcon = () =>
    <svg width="24" height="26" viewBox="0 0 24 26">
        <rect x="0" y="0" width="19" height="19" rx="3" fill="#d9d9d9" />
        <rect x="4" y="4" width="10" height="10" fill="none" stroke="#c8281e" strokeWidth="2" strokeDasharray="2 1" />
        <path d="M13 16 18 24M22 14 16 18" stroke="#1e6fc9" strokeWidth="1.300" />
        <circle cx="18" cy="24" r="1.500" fill="none" stroke="#1e6fc9" />
    </svg>;

const ChromeIcon = () =>
    <svg width="30" height="28" viewBox="0 0 30 28">
        <circle cx="12" cy="15" r="12" fill="#2f8f3b" />
        <path d="M12 3a12 12 0 0 1 10.400 6H12a6 6 0 0 0-5.200 3L3 7a12 12 0 0 1 9-4z" fill="#c8281e" />
        <path d="M22.400 9A12 12 0 0 1 12 27l5-9a6 6 0 0 0 0-9z" fill="#e8a81e" />
        <circle cx="12" cy="15" r="5.500" fill="#fff" /><circle cx="12" cy="15" r="4.300" fill="#1a57d8" />
        <circle cx="22" cy="8" r="7.500" fill="#8d8d8d" /><path d="M14.500 8h15" stroke="#666" />
    </svg>;

const MonitorIcon = () =>
    <svg width="16" height="19" viewBox="0 0 16 19" fill="none" stroke="#111" strokeWidth="1.200"><path d="M10 1H1v13h13V8" /><path d="M6 14v4h5" /><rect x="10" y="0" width="5" height="7" /></svg>;

const SpeakerIcon = () =>
    <svg width="15" height="15" viewBox="0 0 15 15" fill="none" stroke="#111"><path d="M1 5v5h2.500L7 13V2L3.500 5z" /><path d="M9.500 5c1 1.500 1 3.500 0 5M11.500 3.500c2 2 2 6 0 8" /></svg>;

/* ---------- data ---------- */

const A = 2, B = 3, C = 4, D = 5, E = 6;
const MONTHS = Array.from({length: 12}, (_, i) => i);
const COLUMNS = 'ABCDEFGHIJKLMNOPQRSTUVW'.split('');
const DASH = '-';

interface CellSpec {
    col: number;
    text?: string;
    tail?: string;
    span?: number;
    align?: string;
    bold?: boolean;
    blue?: boolean;
    yellow?: boolean;
    indent?: number;
    dotted?: boolean;
    heavy?: boolean;
    under?: boolean;
    wrap?: boolean;
    title?: boolean;
}

const inputCell = (col: number, text: string): CellSpec =>
    ({col, text, align: 'center', blue: true, yellow: true, dotted: true});

const labelCell = (text: string): CellSpec =>
    ({col: B, text, blue: true, yellow: true, dotted: true, indent: 10});

const heading = (text: string): CellSpec =>
    ({col: B, text, bold: true, under: true, indent: 3});

const PAID: Record<number, [string, string, string, string, string]> = {
    28: ['Closing Costs', '$50,000', '100%', '100%|0%|0%', '0%'],
    29: ['Item 2', '$150,000', '100%', '50%|25%|25%', '0%'],
    30: ['Item 3', '$100,000', '100%', '50%|25%|25%', '0%'],
    31: ['Item 4', DASH, '0%', '0%|0%|0%', '0%'],
    32: ['Item 5', DASH, '0%', '0%|0%|0%', '0%'],
};

const TIMELINE: Record<number, [string, string, string[]]> = {
    38: ['Closing Costs', '$50,000', ['$50,000', DASH, DASH]],
    39: ['Item 2', '$150,000', ['$75,000', '$37,500', '$37,500']],
    40: ['Item 3', '$100,000', ['$50,000', '$25,000', '$25,000']],
    41: ['Item 4', DASH, [DASH, DASH, DASH]],
    42: ['Item 5', DASH, [DASH, DASH, DASH]],
};

const cellsFor = (n: number): CellSpec[] => {
    if (n === 1) return [{col: A, text: 'CAPEX (2) Acquisitions per Location', bold: true, title: true, indent: 2}];
    if (n === 2) return [{col: A, text: 'This tab is a way to give more detail to the total capex for each newly acquired car wash, timelines, and line items.', indent: 2}];
    if (n === 3) return [{col: A, span: 2, text: 'Edit cells in this shade only.', blue: true, yellow: true, indent: 2}];
    if (n === 6) return [
        {col: C, text: 'Total Cost', bold: true, align: 'center', heavy: true},
        {col: D, text: 'Total % Check', bold: true, align: 'center', heavy: true},
        ...MONTHS.map(m => ({col: E + m, text: `Month ${m + 1}`, bold: true, align: 'center', heavy: true})),
    ];
    if (n === 7) return [{col: C, text: '$2,650,000', bold: true, align: 'center', heavy: true}];
    if (n === 8) return [heading('Costs Subject to Acquisition Loan')];
    if (n === 9) return [labelCell('Purchase Price'), inputCell(C, '$2,500,000')];
    if (n === 10) return [labelCell('Renovations'), inputCell(C, '$150,000')];
    if (n >= 11 && n <= 25) {
        const cells = [labelCell(`Other Items ${n - 10}`), inputCell(C, DASH)];
        if (n === 11) {
            cells.push({col: E, span: 4, wrap: true, text: 'All the costs in this section hit cash flow in month 1 of the acquisition.'});
        }
        return cells;
    }
    if (n === 27) return [
        heading('Other Non-Financed Costs'),
        {col: C, text: '$300,000', bold: true, align: 'center', heavy: true},
        {col: E, text: '% of Cost Paid per Month', tail: '>'.repeat(38), bold: true, indent: 2},
    ];
    if (PAID[n]) {
        const [label, cost, check, first, rest] = PAID[n];
        const share = first.split('|');
        return [
            labelCell(label),
            inputCell(C, cost),
            {col: D, text: check, align: 'center', dotted: true},
            ...MONTHS.map(m => inputCell(E + m, share[m] ?? rest)),
        ];
    }
    if (n === 37) return [
        heading('Cost Over Time (non-financed)'),
        {col: D, text: '$300,000', bold: true, align: 'center', heavy: true},
        ...MONTHS.map(m => ({
            col: E + m,
            text: ['$175,000', '$62,500', '$62,500'][m] ?? DASH,
            bold: true,
            align: 'right',
            heavy: true,
        })),
    ];
    if (TIMELINE[n]) {
        const [label, total, values] = TIMELINE[n];
        return [
            {col: B, text: label, dotted: true, indent: 2},
            {col: C, dotted: true},
            {col: D, text: total, align: 'center', dotted: true},
            ...MONTHS.map(m => ({col: E + m, text: values[m] ?? DASH, align: 'right', dotted: true})),
        ];
    }
    return [];
};

const rowHeight = (n: number) => {
    if (n === 1) return 21.7;
    if (n === 8) return 17.2;
    return n < 8 ? 16.6 : 16.57;
};

const TABS: {name: string; w: number; kind: string}[] = [
    {name: 'Index', w: 48, kind: 'white'},
    {name: 'Global Control', w: 102, kind: 'yellow'},
    {name: 'Executive Summary', w: 132, kind: 'purple'},
    {name: 'Ramping', w: 68, kind: 'yellow'},
    {name: 'CAPEX (1)', w: 73, kind: 'yellow'},
    {name: 'CAPEX (2)', w: 72, kind: 'active'},
    {name: 'M1', w: 35, kind: 'none'},
    {name: 'M2', w: 34, kind: 'none'},
    {name: 'OPEX', w: 48, kind: 'yellow'},
    {name: 'Loan2', w: 51, kind: 'yellow'},
    {name: 'Loan3', w: 52, kind: 'yellow'},
    {name: 'Cap Table', w: 74, kind: 'yellow'},
    {name: 'Startup Costs', w: 94, kind: 'yellow'},
    {name: 'Terminal Value', w: 105, kind: 'yellow'},
    {name: 'IS- M', w: 47, kind: 'gray'},
    {name: 'IS- A', w: 44, kind: 'gray'},
    {name: 'BS- M', w: 52, kind: 'gray'},
    {name: 'BS- A', w: 47, kind: 'gray'},
    {name: 'CF- M', w: 52, kind: 'gray'},
    {name: 'CF- A', w: 48, kind: 'gray'},
    {name: 'DCF Analysis', w: 90, kind: 'purple'},
    {name: 'V', w: 18, kind: 'purple'},
];

const MENU = ['File', 'Home', 'Insert', 'Page Layout', 'Formulas', 'Data', 'Review', 'View', 'Automate', 'Developer', 'Help', 'Acrobat'];

/* ---------- page ---------- */

const RibbonBar = () =>
    <Ribbon>
        <Group $w={163}>
            <GroupBody $pad={7}>
                <Big $w={48}>
                    <BigIcon><PasteIcon /></BigIcon>
                    Paste
                    <Chev />
                </Big>
                <SmallColumn $w={105}>
                    <SmallRow><Slot $w={15}><ScissorsIcon /></Slot>Cut</SmallRow>
                    <SmallRow><Slot $w={15}><CopyIcon /></Slot>Copy<Slot $w={32}><Chev /></Slot></SmallRow>
                    <SmallRow><Slot $w={15}><PainterIcon /></Slot>Format Painter</SmallRow>
                </SmallColumn>
            </GroupBody>
            <GroupLabel $launch>Clipboard<Launcher><LauncherIcon /></Launcher></GroupLabel>
        </Group>
        <Group $w={219}>
            <GroupBody $pad={8}>
                <Stack>
                    <Line>
                        <Select $w={107}>Calibri<Chev /></Select>
                        <Select $w={46}>11<Chev /></Select>
                        <Slot $w={24}><GrowA>A<Chev size={5} /></GrowA></Slot>
                        <Slot $w={21}><GrowA>A<Chev size={5} color="#1e6fc9" /></GrowA></Slot>
                    </Line>
                    <Line>
                        <Slot $w={22}><FontBtn>B</FontBtn></Slot>
                        <Slot $w={24}><FontBtn $italic>I</FontBtn></Slot>
                        <Slot $w={24}><FontBtn $under>U</FontBtn></Slot>
                        <Slot $w={12}><Chev /></Slot>
                        <Slot $w={8}><RuleV /></Slot>
                        <Slot $w={20}><BorderIcon /></Slot>
                        <Slot $w={13}><Chev /></Slot>
                        <Slot $w={8}><RuleV /></Slot>
                        <Slot $w={18}><FillIcon /></Slot>
                        <Slot $w={16}><Chev /></Slot>
                        <Slot $w={24}><FontColorIcon /></Slot>
                        <Slot $w={12}><Chev /></Slot>
                    </Line>
                </Stack>
            </GroupBody>
            <GroupLabel $launch>Font<Launcher><LauncherIcon /></Launcher></GroupLabel>
        </Group>
        <Group $w={280}>
            <GroupBody $pad={8}>
                <AlignSide>
                    <Stack>
                        <Line>
                            <Pressed $w={22}><Lines widths={[[1, 12], [3, 8], [0, 0]]} /></Pressed>
                            <Pressed $w={24}><Lines top={4} widths={[[1, 12], [3, 8], [1, 12]]} /></Pressed>
                            <Pressed $w={22} $on><Lines top={5} widths={[[3, 8], [1, 12], [1, 12]]} /></Pressed>
                            <Slot $w={4}><RuleV /></Slot>
                            <Slot $w={26}><OrientIcon /></Slot>
                            <Slot $w={10}><Chev /></Slot>
                        </Line>
                        <Line>
                            <Pressed $w={23}><Lines widths={[[0, 14], [0, 9], [0, 14], [0, 9]]} /></Pressed>
                            <Pressed $w={22} $on><Lines widths={[[0, 14], [2, 10], [0, 14], [2, 10]]} /></Pressed>
                            <Pressed $w={26}><Lines widths={[[0, 14], [5, 9], [0, 14], [5, 9]]} /></Pressed>
                            <Slot $w={1}><RuleV /></Slot>
                            <Slot $w={25}><IndentIcon /></Slot>
                            <Slot $w={20}><IndentIcon flip /></Slot>
                        </Line>
                    </Stack>
                </AlignSide>
                <SmallColumn $w={135} $gap={5}>
                    <Stack>
                        <Line><Slot $w={23}><WrapIcon /></Slot>Wrap Text</Line>
                        <Line><Slot $w={23}><MergeIcon /></Slot>Merge &amp; Center<Slot $w={36}><Chev /></Slot></Line>
                    </Stack>
                </SmallColumn>
            </GroupBody>
            <GroupLabel $launch>Alignment<Launcher><LauncherIcon /></Launcher></GroupLabel>
        </Group>
        <Group $w={151}>
            <GroupBody $pad={8}>
                <Stack>
                    <Line><Select $w={135}>Custom<Chev /></Select></Line>
                    <Line>
                        <Slot $w={22}><NumberGlyph $size={18} $weight={500}>$</NumberGlyph></Slot>
                        <Slot $w={12}><Chev /></Slot>
                        <Slot $w={32}><NumberGlyph $size={18}>%</NumberGlyph></Slot>
                        <Slot $w={16}><CommaIcon /></Slot>
                        <Slot $w={9}><RuleV /></Slot>
                        <Slot $w={16}><DecimalIcon up /></Slot>
                        <Slot $w={5}> </Slot>
                        <Slot $w={20}><DecimalIcon /></Slot>
                    </Line>
                </Stack>
            </GroupBody>
            <GroupLabel $launch>Number<Launcher><LauncherIcon /></Launcher></GroupLabel>
        </Group>
        <Group $w={368}>
            <GroupBody $pad={7}>
                <Big $w={70}>
                    <BigIcon><ConditionalIcon /></BigIcon>
                    Conditional
                    <span>Formatting <Chev size={7} /></span>
                </Big>
                <Big $w={58}>
                    <BigIcon><FormatTableIcon /></BigIcon>
                    Format as
                    <span>Table <Chev size={7} /></span>
                </Big>
                <Gallery>
                    <StyleGrid>
                        <StyleCell $bg="#fff" $fg="#000" $selected>Normal</StyleCell>
                        <StyleCell $bg="#ff9c9c" $fg="#9c0006">Bad</StyleCell>
                        <StyleCell $bg="#a0dc9c" $fg="#005c1e" $w={94}>Good</StyleCell>
                        <StyleCell $bg="#ffd54f" $fg="#8a4b00">Neutral</StyleCell>
                    </StyleGrid>
                    <GalleryMore><CustomizeIcon color="#333" /></GalleryMore>
                </Gallery>
            </GroupBody>
            <GroupLabel>Styles</GroupLabel>
        </Group>
        <Group $w={136}>
            <GroupBody $pad={6}>
                <Big $w={41}><BigIcon><InsertIcon /></BigIcon>Insert<Chev /></Big>
                <Big $w={41}><BigIcon><DeleteIcon /></BigIcon>Delete<Chev /></Big>
                <Big $w={41}><BigIcon><FormatIcon /></BigIcon>Format<Chev /></Big>
            </GroupBody>
            <GroupLabel>Cells</GroupLabel>
        </Group>
        <Group $w={203}>
            <GroupBody $pad={14}>
                <SmallColumn $w={92}>
                    <SmallRow><Slot $w={15}><NumberGlyph $size={17}>Σ</NumberGlyph></Slot>AutoSum<Slot $w={32}><Chev /></Slot></SmallRow>
                    <SmallRow><FillDownIcon />Fill<Chev size={7} /></SmallRow>
                    <SmallRow><ClearIcon />Clear<Chev size={7} /></SmallRow>
                </SmallColumn>
                <Big $w={44}><BigIcon><SortIcon /></BigIcon>Sort &amp;<span>Filter <Chev size={7} /></span></Big>
                <Big $w={44}><BigIcon><FindIcon /></BigIcon>Find &amp;<span>Select <Chev size={7} /></span></Big>
            </GroupBody>
            <GroupLabel>Editing</GroupLabel>
        </Group>
        <Group $w={58}>
            <GroupBody>
                <Big $w={58}><BigIcon><AddinsIcon /></BigIcon>Add-ins</Big>
            </GroupBody>
            <GroupLabel>Add-ins</GroupLabel>
        </Group>
        <Group $w={101}>
            <GroupBody $pad={1}>
                <Big $w={56}><BigIcon><AnalyzeIcon /></BigIcon>Analyze<span>Data</span></Big>
                <Big $w={32}><BigIcon><CopilotIcon /></BigIcon>Copilot</Big>
            </GroupBody>
            <GroupLabel> </GroupLabel>
        </Group>
        <Group $w={74}>
            <GroupBody>
                <Big $w={74}><BigIcon><PdfIcon /></BigIcon>Create<span>a PDF</span></Big>
            </GroupBody>
            <GroupLabel>Adobe Acrobat</GroupLabel>
        </Group>
        <Group $w={53}>
            <GroupBody>
                <Big $w={53}><BigIcon><SolverIcon /></BigIcon>Solver</Big>
            </GroupBody>
            <GroupLabel>Solver</GroupLabel>
        </Group>
        <RibbonCollapse><Chev size={12} /></RibbonCollapse>
    </Ribbon>;

const SheetGrid = () =>
    <SheetArea>
        <SheetMain>
            <ColumnHeader>
                <Corner><CornerTriangle /></Corner>
                {COLUMNS.map(name => <ColumnHead key={name} $freeze={name === 'D'}>{name}</ColumnHead>)}
            </ColumnHeader>
            <SheetBody>
                {Array.from({length: 46}, (_, i) => i + 1).map(n =>
                    <Row key={n} $h={rowHeight(n)} $freeze={n === 7}>
                        <RowHead>{n}</RowHead>
                        {cellsFor(n).map(({col, text, tail, span, align, bold, blue, yellow, indent, dotted, heavy, under, wrap, title}) =>
                            <Cell
                                key={col}
                                $col={col}
                                $span={span}
                                $align={align}
                                $bold={bold}
                                $blue={blue}
                                $yellow={yellow}
                                $indent={indent}
                                $dotted={dotted}
                                $heavy={heavy}
                                $under={under}
                                $wrap={wrap}
                                $title={title}
                            >
                                <span>{text}{tail && <Arrows>{tail}</Arrows>}</span>
                            </Cell>)}
                    </Row>)}
                <FreezeLine />
            </SheetBody>
        </SheetMain>
        <Scrollbar>
            <ScrollArrow />
            <ScrollThumb />
            <ScrollArrow $down />
        </Scrollbar>
    </SheetArea>;

const App = () =>
    <Window>
        <GlobalStyle />
        <TitleBar>
            <TitleLeft>
                <Slot $w={32}><ExcelLogo /></Slot>
                <Faded $w={47}>AutoSave</Faded>
                <Toggle>Off</Toggle>
                <Slot $w={26}><SaveIcon /></Slot>
                <Slot $w={22}><Undo2 size={16} color="#8a8a8a" /></Slot>
                <Slot $w={12}><Chev size={7} color="#8a8a8a" /></Slot>
                <Slot $w={24}><Redo2 size={16} color="#8a8a8a" /></Slot>
                <Slot $w={14}><Chev size={7} color="#8a8a8a" /></Slot>
                <Slot $w={22}><CustomizeIcon /></Slot>
                <Slot $w={17}> </Slot>
                <Faded $size={11.4}>Scaling Multiple Car Wash Locations Model  •  Saved to this PC</Faded>
                <Slot $w={14}><Chev color="#8a8a8a" /></Slot>
            </TitleLeft>
            <SearchBox><Search size={14} color="#8c8c8c" style={{transform: 'scaleX(-1)'}} />Search</SearchBox>
            <TitleRight>
                <Avatar>JV</Avatar>
                <WindowButton><Minus size={12} /></WindowButton>
                <WindowButton><RestoreIcon /></WindowButton>
                <WindowButton><X size={16} strokeWidth={1.3} /></WindowButton>
            </TitleRight>
        </TitleBar>
        <MenuRow>
            {MENU.map(name => <MenuItem key={name} $active={name === 'Home'}>{name}</MenuItem>)}
            <MenuRight>
                <CommentsButton><BubbleIcon />Comments</CommentsButton>
                <ShareButton><ShareIcon />Share<Chev size={7} color="#a5d6b7" /></ShareButton>
                <CoachIcon />
            </MenuRight>
        </MenuRow>
        <RibbonBar />
        <FormulaBar>
            <NameBox>C19<Chev size={10} /></NameBox>
            <Grip>⋮</Grip>
            <FxBox>
                <X size={17} strokeWidth={1.1} />
                <Check size={17} strokeWidth={1.1} />
                <Fx>fx</Fx>
                <Chev size={9} color="#666" />
            </FxBox>
            <FormulaInput>0<Chev size={10} /></FormulaInput>
        </FormulaBar>
        <SheetGrid />
        <TabBar>
            <TabArrows><ChevronLeft size={15} strokeWidth={1.4} /><ChevronRight size={15} strokeWidth={1.4} /></TabArrows>
            <TabList>
                {TABS.map(({name, w, kind}) => kind === 'active'
                    ? <ActiveTab key={name} $w={w}>{name}</ActiveTab>
                    : <Tab key={name} $w={w} $kind={kind}>{name}</Tab>)}
            </TabList>
            <TabTools>
                <Slot $w={28}><b>•••</b></Slot>
                <Slot $w={32}><Plus size={15} /></Slot>
                <Slot $w={30}><b>⋮</b></Slot>
                <ScrollArrowLeft />
                <HScrollThumb />
                <Slot $w={50}> </Slot>
                <ScrollArrowRight />
            </TabTools>
        </TabBar>
        <StatusBar>
            <StatusLeft>
                <span>Ready</span>
                <MacroIcon />
                <Accessibility><AccessIcon />Accessibility: Investigate</Accessibility>
            </StatusLeft>
            <StatusRight>
                <ViewButton $on><NormalViewIcon /></ViewButton>
                <ViewButton><PageViewIcon /></ViewButton>
                <ViewButton><BreakViewIcon /></ViewButton>
                <Slot $w={10}><Minus size={9} /></Slot>
                <ZoomTrack />
                <Slot $w={10}><Plus size={9} /></Slot>
                <Slot $w={34}>90%</Slot>
            </StatusRight>
        </StatusBar>
        <Taskbar>
            <Weather>
                <WeatherIcon />
                <WeatherText>66°F<br />Sunny</WeatherText>
            </Weather>
            <WindowsIcon />
            <TaskSearch>
                <Search size={16} strokeWidth={2.6} color="#111" />
                Search
                <BalloonSlot><Balloons /></BalloonSlot>
            </TaskSearch>
            <TaskItem><TaskViewIcon /></TaskItem>
            <TaskItem $dot><FolderIcon /></TaskItem>
            <TaskItem $dot><OperaIcon /></TaskItem>
            <TaskItem><SnipIcon /></TaskItem>
            <TaskItem $dot><ExcelLogo size={23} /></TaskItem>
            <TaskItem $dot><ChromeIcon /></TaskItem>
            <Tray>
                <TrayChevron><ChevronUp size={15} color="#111" /></TrayChevron>
                <MonitorIcon />
                <SpeakerIcon />
                <Clock>8:04 AM<br />8/18/2025</Clock>
            </Tray>
        </Taskbar>
    </Window>;

export default App;
